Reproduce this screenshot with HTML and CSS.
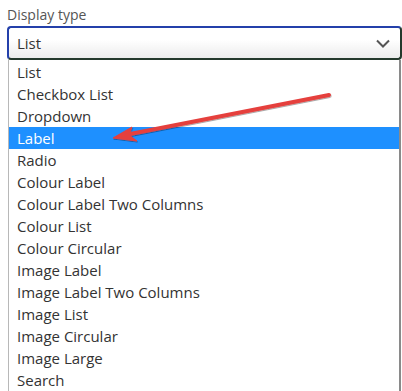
FILE: index.html
```html
<!DOCTYPE html>
<html lang="en">
<head>
  <meta charset="UTF-8" />
  <title>Display type</title>
  <link rel="stylesheet" href="styles.css">
</head>
<body>

  <div class="field">
    <div class="field-label">Display type</div>

    <!-- Select cerrado -->
    <div class="select">
      <span>List</span>
      <svg class="chevron" width="14" height="9" viewBox="0 0 14 9">
        <path d="M1 1.5 L7 7.5 L13 1.5" fill="none" stroke="#555" stroke-width="2"/>
      </svg>
    </div>

    <!-- Opciones abiertas -->
    <ul class="options">
      <li>List</li>
      <li>Checkbox List</li>
      <li>Dropdown</li>
      <li class="selected">Label</li>
      <li>Radio</li>
      <li>Colour Label</li>
      <li>Colour Label Two Columns</li>
      <li>Colour List</li>
      <li>Colour Circular</li>
      <li>Image Label</li>
      <li>Image Label Two Columns</li>
      <li>Image List</li>
      <li>Image Circular</li>
      <li>Image Large</li>
      <li>Search</li>
    </ul>

    <!-- Flecha roja de anotación -->
    <svg class="annotation" width="402" height="391" viewBox="0 0 402 391">
      <g fill="#e5403e" stroke="#e5403e" filter="url(#sombra)">
        <line x1="329" y1="95" x2="125" y2="135" stroke-width="4" stroke-linecap="round"/>
        <polygon points="113,138 132,127 129,135 137,141" stroke-width="1" stroke-linejoin="round"/>
      </g>
      <defs>
        <filter id="sombra" x="-10%" y="-10%" width="120%" height="140%">
          <feDropShadow dx="0.5" dy="1" stdDeviation="0.6" flood-color="#000" flood-opacity="0.35"/>
        </filter>
      </defs>
    </svg>
  </div>

</body>
</html>
```

FILE: styles.css
```css
body {
  margin: 0;
  padding: 0;
  background: #ffffff;
  font-family: "Open Sans", "Noto Sans", sans-serif;
  overflow: hidden;
}

.field {
  position: relative;
  padding: 5px 0 0 7px;
}

.field-label {
  font-size: 14px;
  line-height: 19px;
  color: #555;
  margin-bottom: 2px;
}

.select {
  height: 34px;
  box-sizing: border-box;
  border: 2px solid #2440aa;
  border-bottom-color: #24392c;
  border-right-color: #24392c;
  border-radius: 4px;
  background: linear-gradient(#ffffff 40%, #ececec);
  display: flex;
  align-items: center;
  justify-content: space-between;
  padding: 0 10px 0 8px;
  font-size: 15px;
  color: #333;
}

.chevron {
  margin-top: 1px;
}

.options {
  list-style: none;
  margin: 0 1px 0 1px;
  padding: 1px 0 0 0;
  border-left: 1px solid #b8b8b8;
  border-right: 2px solid #8a8a8a;
  background: #fff;
  font-size: 15px;
  color: #333;
}

.options li {
  height: 22px;
  line-height: 22px;
  padding-left: 8px;
}

.options li.selected {
  background: #1e90ff;
  color: #fff;
}

.annotation {
  position: absolute;
  top: 0;
  left: 0;
  pointer-events: none;
}
```
